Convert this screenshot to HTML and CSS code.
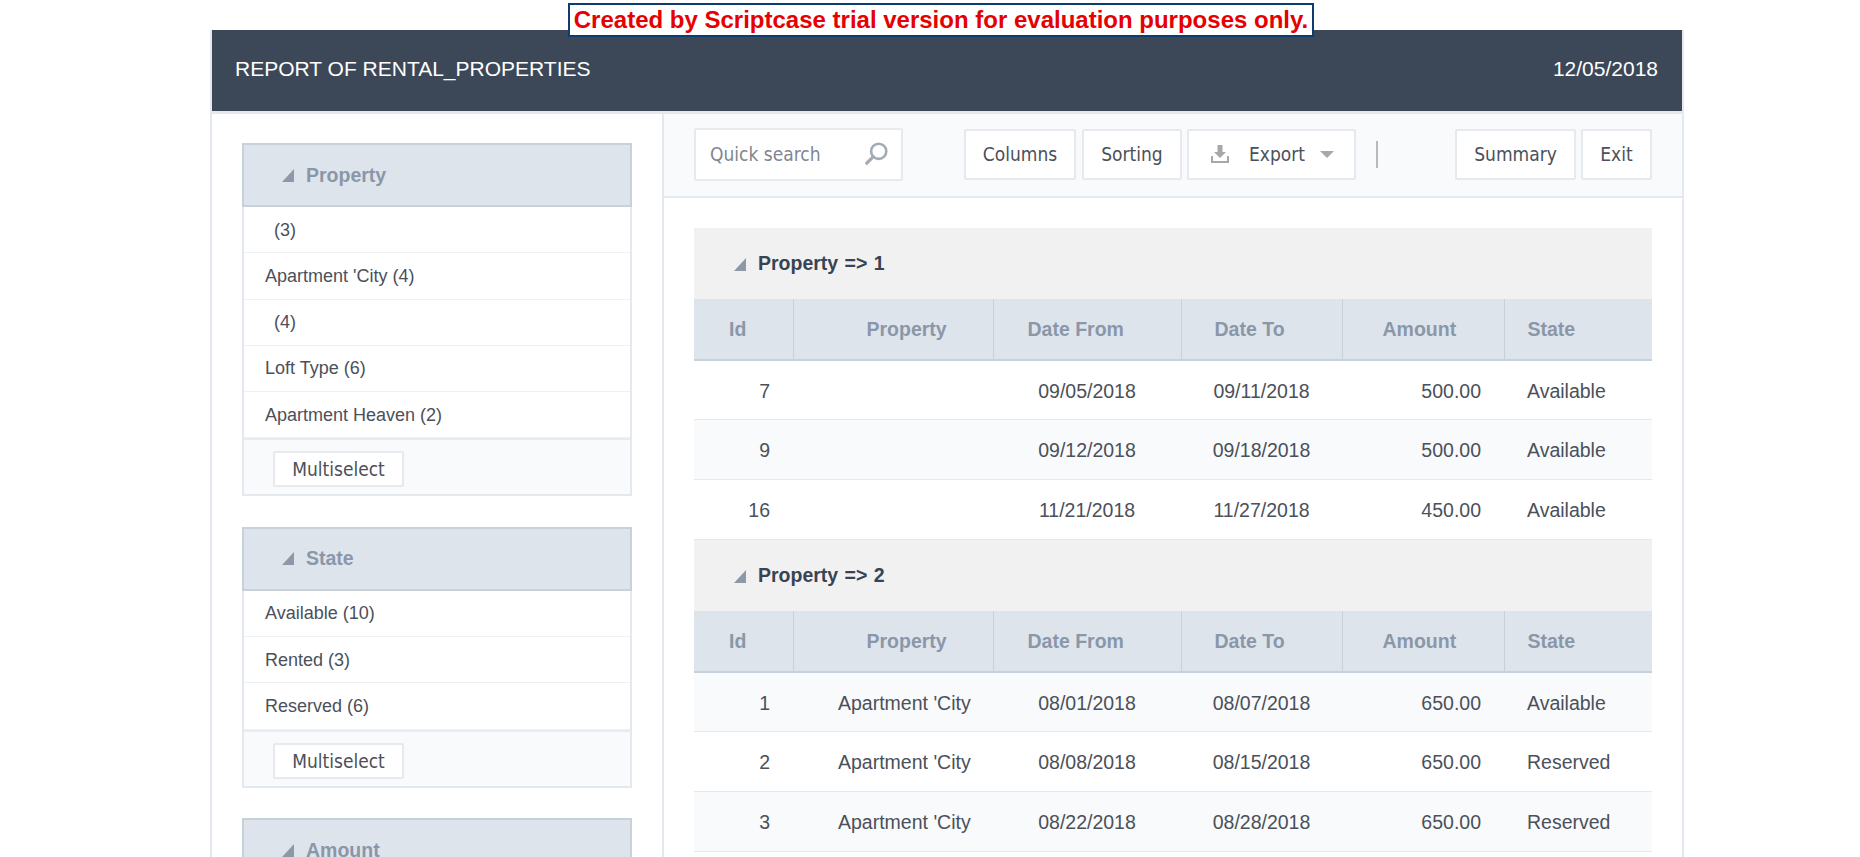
FILE: index.html
```html
<!DOCTYPE html>
<html lang="en">
<head>
  <meta charset="UTF-8">
  <title>Report of rental_properties</title>
  <link rel="stylesheet" href="styles.css">
</head>
<body>
  <div class="trial-notice">Created by Scriptcase trial version for evaluation purposes only.</div>

  <div class="report">
    <div class="report-header">
      <span>REPORT OF RENTAL_PROPERTIES</span>
      <span>12/05/2018</span>
    </div>

    <div class="report-body">
      <!-- Filters -->
      <div class="sidebar">
        <div class="panel">
          <div class="panel-head">
            <svg class="corner" viewBox="0 0 12 13"><polygon points="12,0 12,13 0,13"/></svg>
            Property
          </div>
          <div class="panel-item empty">(3)</div>
          <div class="panel-item">Apartment 'City (4)</div>
          <div class="panel-item empty">(4)</div>
          <div class="panel-item">Loft Type (6)</div>
          <div class="panel-item">Apartment Heaven (2)</div>
          <div class="panel-foot"><button class="btn btn-small">Multiselect</button></div>
        </div>

        <div class="panel">
          <div class="panel-head">
            <svg class="corner" viewBox="0 0 12 13"><polygon points="12,0 12,13 0,13"/></svg>
            State
          </div>
          <div class="panel-item">Available (10)</div>
          <div class="panel-item">Rented (3)</div>
          <div class="panel-item">Reserved (6)</div>
          <div class="panel-foot"><button class="btn btn-small">Multiselect</button></div>
        </div>

        <div class="panel">
          <div class="panel-head">
            <svg class="corner" viewBox="0 0 12 13"><polygon points="12,0 12,13 0,13"/></svg>
            Amount
          </div>
        </div>
      </div>

      <div class="content">
        <!-- Toolbar -->
        <div class="toolbar">
          <div class="search">
            <span>Quick search</span>
            <svg class="search-icon" viewBox="0 0 24 24">
              <circle cx="14.5" cy="9.5" r="7" fill="none" stroke="#a3abb5" stroke-width="2.4"/>
              <line x1="9.5" y1="14.5" x2="3.5" y2="20.5" stroke="#a3abb5" stroke-width="3" stroke-linecap="round"/>
            </svg>
          </div>
          <button class="btn btn-columns">Columns</button>
          <button class="btn btn-sorting">Sorting</button>
          <button class="btn btn-export">
            <svg class="export-icon" viewBox="0 0 18 18">
              <polygon points="6.5,0 11.5,0 11.5,7 15,7 9,13 3,7 6.5,7" fill="#a8a8a8"/>
              <path d="M1 11 V17 H17 V11" fill="none" stroke="#a8a8a8" stroke-width="2"/>
            </svg>
            <span>Export</span>
            <svg class="caret" viewBox="0 0 14 7"><polygon points="0,0 14,0 7,7" fill="#a8a8a8"/></svg>
          </button>
          <div class="separator"></div>
          <button class="btn btn-summary">Summary</button>
          <button class="btn btn-exit">Exit</button>
        </div>

        <!-- Grid -->
        <div class="grid-wrap">
          <table class="grid">
            <colgroup>
              <col class="col-id"><col class="col-property"><col class="col-from">
              <col class="col-to"><col class="col-amount"><col class="col-state">
            </colgroup>
            <tr class="group-row">
              <td colspan="6"><svg class="corner" viewBox="0 0 12 13"><polygon points="12,0 12,13 0,13"/></svg>Property =&gt; 1</td>
            </tr>
            <tr class="head-row">
              <th>Id</th><th>Property</th><th>Date From</th><th>Date To</th><th>Amount</th><th>State</th>
            </tr>
            <tr>
              <td class="num">7</td><td></td><td class="date">09/05/2018</td><td class="date">09/11/2018</td><td class="num">500.00</td><td>Available</td>
            </tr>
            <tr class="alt">
              <td class="num">9</td><td></td><td class="date">09/12/2018</td><td class="date">09/18/2018</td><td class="num">500.00</td><td>Available</td>
            </tr>
            <tr>
              <td class="num">16</td><td></td><td class="date">11/21/2018</td><td class="date">11/27/2018</td><td class="num">450.00</td><td>Available</td>
            </tr>
            <tr class="group-row">
              <td colspan="6"><svg class="corner" viewBox="0 0 12 13"><polygon points="12,0 12,13 0,13"/></svg>Property =&gt; 2</td>
            </tr>
            <tr class="head-row">
              <th>Id</th><th>Property</th><th>Date From</th><th>Date To</th><th>Amount</th><th>State</th>
            </tr>
            <tr class="alt">
              <td class="num">1</td><td class="name">Apartment 'City</td><td class="date">08/01/2018</td><td class="date">08/07/2018</td><td class="num">650.00</td><td>Available</td>
            </tr>
            <tr>
              <td class="num">2</td><td class="name">Apartment 'City</td><td class="date">08/08/2018</td><td class="date">08/15/2018</td><td class="num">650.00</td><td>Reserved</td>
            </tr>
            <tr class="alt">
              <td class="num">3</td><td class="name">Apartment 'City</td><td class="date">08/22/2018</td><td class="date">08/28/2018</td><td class="num">650.00</td><td>Reserved</td>
            </tr>
          </table>
        </div>
      </div>
    </div>
  </div>
</body>
</html>
```

FILE: styles.css
```css
html, body {
  height: 100%;
  overflow: hidden;
}

body {
  margin: 0;
  padding-top: 30px;
  box-sizing: border-box;
  background-color: #fff;
  font-family: "Liberation Sans", Arial, sans-serif;
  color: #4b505a;
}

.trial-notice {
  position: absolute;
  top: 3px;
  left: 568px;
  width: 746px;
  height: 34px;
  box-sizing: border-box;
  border: 2px solid #0d3c6e;
  background-color: #fff;
  color: #e60000;
  font-size: 24px;
  font-weight: bold;
  line-height: 29px;
  text-align: center;
  white-space: nowrap;
}

.report {
  width: 1470px;
  margin-left: 210px;
  border-left: 2px solid #e3e9ef;
  border-right: 2px solid #e3e9ef;
}

.report-header {
  height: 77px;
  padding: 0 24px 4px 23px;
  display: flex;
  justify-content: space-between;
  align-items: center;
  background-color: #3c4858;
  border-bottom: 3px solid #e3e9ef;
  color: #fff;
  font-size: 21px;
}

.report-body {
  display: flex;
}

/* sidebar */
.sidebar {
  width: 390px;
  flex-shrink: 0;
  padding: 29px 30px 0;
  border-right: 2px solid #e3e9ef;
}

.panel {
  margin-bottom: 30.5px;
  border: 2px solid #e3e9ef;
  border-top: 0;
}

.panel-head {
  height: 60px;
  margin: 0 -2px;
  padding-left: 38px;
  display: flex;
  align-items: center;
  background-color: #dee4ec;
  border: 2px solid #c8d0da;
  color: #8a97a8;
  font-size: 19.5px;
  font-weight: bold;
}

.corner {
  width: 12px;
  height: 13px;
  margin-right: 12px;
  fill: #8e99a8;
}

.panel-item {
  height: 44.25px;
  padding: 1px 0 0 21px;
  display: flex;
  align-items: center;
  border-bottom: 1px solid #eef1f4;
  font-size: 18px;
}

.panel-item.empty {
  padding-left: 30px;
}

.panel-foot {
  height: 56px;
  padding-top: 11px;
  padding-left: 29px;
  box-sizing: border-box;
  background-color: #f8fafb;
  border-top: 2px solid #e8ecf0;
}

/* buttons */
.btn {
  height: 51px;
  padding: 0;
  box-sizing: border-box;
  background-color: #fff;
  border: 2px solid #e6eaef;
  border-radius: 2px;
  color: #4b505a;
  font-family: "DejaVu Sans", sans-serif;
  font-stretch: condensed;
  font-size: 19px;
}

.btn-small {
  width: 131px;
  height: 36px;
}

.btn-columns { width: 112px; }
.btn-sorting { width: 100px; margin-right: -1px; }
.btn-summary { width: 121px; margin-left: auto; margin-right: -1px; }
.btn-exit { width: 71px; }

.btn-export {
  width: 169px;
  padding: 0 13px 0 22px;
  display: flex;
  align-items: center;
}

.export-icon {
  width: 18px;
  height: 18px;
  margin-right: 20px;
}

.caret {
  width: 14px;
  height: 7px;
  margin-left: 15px;
}

/* toolbar */
.content {
  flex: 1;
  min-width: 0;
}

.toolbar {
  height: 80px;
  padding: 0 30px 2px;
  display: flex;
  align-items: center;
  gap: 6px;
  background-color: #f8fafb;
  border-bottom: 2px solid #e3e9ef;
}

.search {
  width: 209px;
  height: 53px;
  margin-right: 55px;
  padding: 0 12px 0 14px;
  box-sizing: border-box;
  display: flex;
  align-items: center;
  justify-content: space-between;
  background-color: #fff;
  border: 2px solid #e6eaef;
  border-radius: 2px;
  color: #7f8690;
  font-family: "DejaVu Sans", sans-serif;
  font-stretch: condensed;
  font-size: 19px;
}

.search-icon {
  width: 26px;
  height: 26px;
  flex-shrink: 0;
}

.separator {
  width: 2px;
  height: 27px;
  margin-left: 14px;
  background-color: #b4b9bf;
}

/* grid */
.grid-wrap {
  padding: 30px 30px 0;
}

.grid {
  width: 958px;
  table-layout: fixed;
  border-collapse: collapse;
  font-size: 19.5px;
}

.col-id { width: 99px; }
.col-property { width: 200px; }
.col-from { width: 188px; }
.col-to { width: 161px; }
.col-amount { width: 162px; }
.col-state { width: 148px; }

.grid td {
  height: 57px;
  padding: 2px 23px 0;
  border-bottom: 1px solid #e4e9ee;
}

.grid .head-row + tr td {
  height: 56px;
}

.grid tr.alt td {
  background-color: #f8fafb;
}

.grid td.num {
  text-align: right;
}

.grid td.date {
  padding: 2px 0 0;
  text-align: center;
}

.grid td.name {
  padding: 2px 0 0 45px;
}

.grid .group-row td {
  height: 71px;
  padding: 0 0 0 40px;
  background-color: #f1f1f1;
  border: 0;
  color: #384454;
  font-size: 19.5px;
  font-weight: bold;
  word-spacing: 1px;
}

.grid .group-row .corner {
  vertical-align: -1px;
}

.grid .head-row th {
  height: 59px;
  padding: 1px 0 0;
  background-color: #dee4ec;
  border-bottom: 2px solid #c8d0da;
  border-left: 1px solid #c8d0da;
  color: #8a97a8;
  font-size: 19.5px;
  text-align: left;
}

.grid .head-row th:first-child {
  border-left: 0;
  padding-left: 35px;
}

.grid .head-row th:nth-child(2) { padding-left: 73px; }
.grid .head-row th:nth-child(3) { padding-left: 34px; }
.grid .head-row th:nth-child(4) { padding-left: 33px; }
.grid .head-row th:nth-child(5) { padding-left: 40px; }
.grid .head-row th:nth-child(6) { padding-left: 23px; }
```
